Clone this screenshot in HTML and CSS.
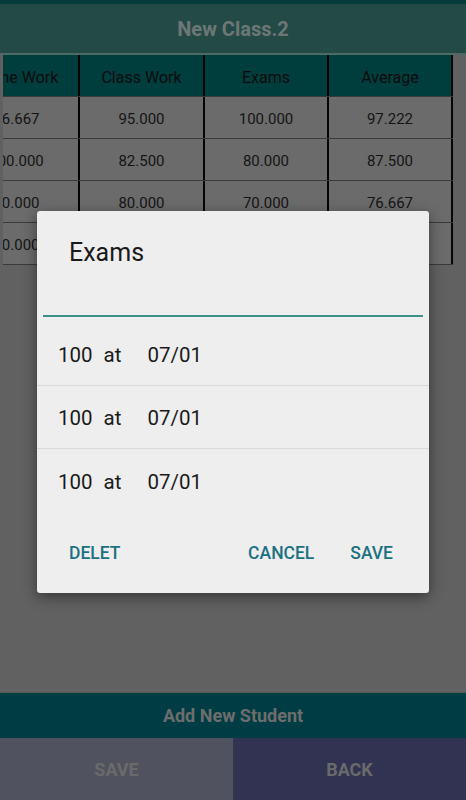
FILE: index.html
```html
<!DOCTYPE html>
<html lang="en">
<head>
<meta charset="utf-8">
<title>New Class.2</title>
<link rel="stylesheet" href="styles.css">
</head>
<body>
<div class="app">
  <div class="status"></div>
  <header class="titlebar">New Class.2</header>
  <div class="divider"></div>
  <main class="content">
    <div class="table-scroll">
      <div class="grades">
        <div class="row head">
          <div class="cell">Home Work</div>
          <div class="cell">Class Work</div>
          <div class="cell">Exams</div>
          <div class="cell">Average</div>
        </div>
        <div class="row">
          <div class="cell">96.667</div>
          <div class="cell">95.000</div>
          <div class="cell">100.000</div>
          <div class="cell">97.222</div>
        </div>
        <div class="row">
          <div class="cell">100.000</div>
          <div class="cell">82.500</div>
          <div class="cell">80.000</div>
          <div class="cell">87.500</div>
        </div>
        <div class="row">
          <div class="cell">80.000</div>
          <div class="cell">80.000</div>
          <div class="cell">70.000</div>
          <div class="cell">76.667</div>
        </div>
        <div class="row">
          <div class="cell">90.000</div>
          <div class="cell">80.000</div>
          <div class="cell">70.000</div>
          <div class="cell">76.667</div>
        </div>
      </div>
    </div>
  </main>
  <div class="add-bar">Add New Student</div>
  <div class="actions">
    <div class="action save">SAVE</div>
    <div class="action back">BACK</div>
  </div>
</div>

<div class="dialog">
  <h2 class="dialog-title">Exams</h2>
  <div class="dialog-input"></div>
  <ul class="entries">
    <li class="entry"><span class="score">100</span><span class="at">at</span><span class="date">07/01</span></li>
    <li class="entry"><span class="score">100</span><span class="at">at</span><span class="date">07/01</span></li>
    <li class="entry"><span class="score">100</span><span class="at">at</span><span class="date">07/01</span></li>
  </ul>
  <div class="dialog-buttons">
    <span class="dbtn">DELET</span>
    <span class="dbtn push">CANCEL</span>
    <span class="dbtn">SAVE</span>
  </div>
</div>
</body>
</html>
```

FILE: styles.css
```css
* { box-sizing: border-box; }

html, body {
  margin: 0;
  padding: 0;
}

body {
  width: 466px;
  height: 800px;
  overflow: hidden;
  background: #616161;
  font-family: Roboto, "Liberation Sans", sans-serif;
  position: relative;
}

.app {
  display: flex;
  flex-direction: column;
  height: 800px;
}

.status {
  height: 4px;
  background: #023c3b;
}

.titlebar {
  height: 49px;
  background: #244a46;
  color: #6d7775;
  font-size: 20px;
  font-weight: 700;
  display: flex;
  align-items: center;
  justify-content: center;
}

.divider {
  height: 2px;
  background: #4f6a64;
}

.content {
  flex: 1;
  background: #616161;
}

.table-scroll {
  margin-left: 3px;
  width: 450px;
  overflow: hidden;
}

.grades {
  margin-left: -48px;
  width: 498px;
}

.row {
  display: grid;
  grid-template-columns: 125px 125px 124px 124px;
  height: 42px;
  background: #6b6b6b;
  border-bottom: 1px solid #3a3a3a;
}

.row.head {
  background: #003d3d;
}

.cell {
  display: flex;
  align-items: center;
  justify-content: center;
  padding-top: 2px;
  border-right: 2px solid #050505;
  font-size: 15px;
  color: #141414;
  white-space: nowrap;
}

.row.head .cell {
  padding-top: 3px;
  font-size: 16px;
  color: #0c0c0c;
}

.add-bar {
  height: 46px;
  background: #003c43;
  color: #6d6d6d;
  font-size: 18px;
  font-weight: 700;
  display: flex;
  align-items: center;
  justify-content: center;
  border-top: 1px solid #585858;
}

.actions {
  height: 62px;
  display: flex;
}

.action {
  flex: 1;
  display: flex;
  align-items: center;
  justify-content: center;
  font-size: 18px;
  font-weight: 700;
  color: #6a6a6a;
}

.action.save { background: #505260; }
.action.back { background: #323352; }

/* Dialog overlay */
.dialog {
  position: absolute;
  left: 37px;
  top: 211px;
  width: 392px;
  height: 382px;
  background: #eeeeee;
  border-radius: 3px;
  box-shadow: 0 4px 14px rgba(0, 0, 0, 0.45);
  display: flex;
  flex-direction: column;
}

.dialog-title {
  margin: 0;
  padding: 26px 0 0 32px;
  height: 52px;
  font-size: 25px;
  line-height: 32px;
  font-weight: 400;
  color: #1a1a1a;
}

.dialog-input {
  margin: 52px 6px 0;
  height: 2px;
  background: #3b9088;
}

.entries {
  list-style: none;
  margin: 6px 0 0;
  padding: 0;
}

.entry {
  height: 63px;
  display: flex;
  align-items: center;
  padding: 2px 0 0 21px;
  font-size: 20.5px;
  color: #1a1a1a;
  border-bottom: 1px solid #d9d9d9;
}

.entry:last-child {
  border-bottom: none;
}

.entry .at {
  margin-left: 11px;
}

.entry .date {
  margin-left: 26px;
}

.dialog-buttons {
  display: flex;
  align-items: center;
  padding: 0 36px 0 32px;
  height: 60px;
  margin-top: 11px;
}

.dbtn {
  font-size: 17.5px;
  font-weight: 500;
  color: #1b7182;
}

.dbtn.push {
  margin-left: auto;
  margin-right: 36px;
}
```
